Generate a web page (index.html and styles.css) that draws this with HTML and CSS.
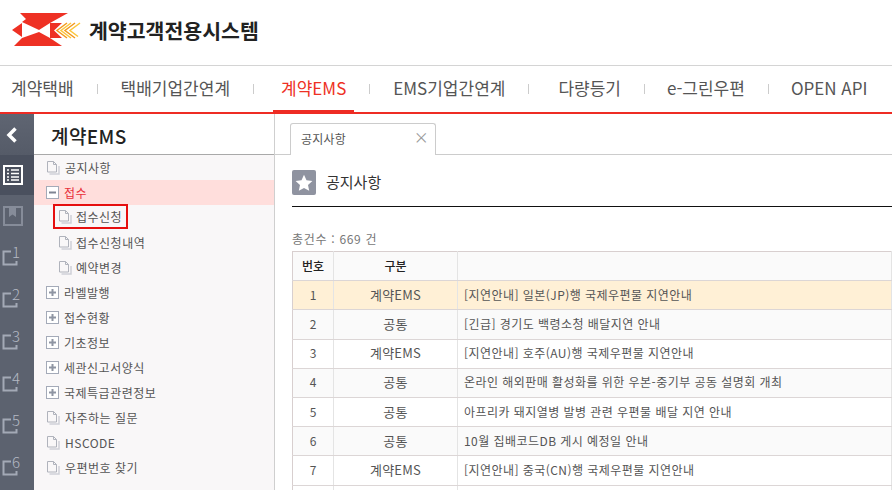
FILE: index.html
```html
<!DOCTYPE html>
<html lang="ko">
<head>
<meta charset="utf-8">
<title>계약고객전용시스템</title>
<link rel="stylesheet" href="styles.css">
</head>
<body>
<svg class="defs" width="0" height="0" aria-hidden="true">
  <symbol id="doc" viewBox="0 0 14 14">
    <path d="M1.500 .5h6l3 3v7.500h-9z" fill="none" stroke="#b0b3bc"/>
    <path d="M7.500 .5v3h3" fill="none" stroke="#b0b3bc"/>
    <path d="M3.500 13h9.500v-8" fill="none" stroke="#cfd1d7" stroke-width="1.500"/>
  </symbol>
  <symbol id="plus" viewBox="0 0 13 13">
    <rect x=".5" y=".5" width="12" height="12" fill="#fff" stroke="#a4aab8"/>
    <path d="M3 6.500h7M6.500 3v7" stroke="#8f95a3" stroke-width="2"/>
  </symbol>
  <symbol id="minus" viewBox="0 0 13 13">
    <rect x=".5" y=".5" width="12" height="12" fill="#fff" stroke="#a4aab8"/>
    <path d="M3 6.500h7" stroke="#7f8593" stroke-width="2"/>
  </symbol>
  <symbol id="corner" viewBox="0 0 20 20">
    <path d="M9 4.500H1.500v13h13V14" fill="none" stroke="#a3a9b6" stroke-width="2"/>
  </symbol>
</svg>

<header class="brand">
  <svg class="logo" width="70" height="34" viewBox="12 13 70 34">
    <path fill="#ee3124" d="M20 13h48L50 23 39 30 22 22l4-3zM14 46h48L50 38 39 32 22 38zM12 30l10-7v14zM50 23h12l-8 7.500 8 7.500H50z"/>
    <path fill="none" stroke="#f39a1f" stroke-width="1.500" d="M67 23l-10 7.500 10 7.500M75 23l-10 7.500 10 7.500"/>
    <path fill="none" stroke="#fbc63c" stroke-width="1.500" d="M71 23l-10 7.500 10 7.500M80 23l-10 7.500 8 6"/>
  </svg>
  <span class="brand-name">계약고객전용시스템</span>
</header>

<nav class="gnb">
  <a class="gnb-item">계약택배</a><i class="gnb-sep"></i>
  <a class="gnb-item">택배기업간연계</a><i class="gnb-sep"></i>
  <a class="gnb-item is-active">계약EMS</a><i class="gnb-sep"></i>
  <a class="gnb-item">EMS기업간연계</a><i class="gnb-sep"></i>
  <a class="gnb-item lead-wide">다량등기</a><i class="gnb-sep"></i>
  <a class="gnb-item lead-tight">e-그린우편</a><i class="gnb-sep"></i>
  <a class="gnb-item lead-tight">OPEN API</a>
</nav>

<div class="workspace">
  <aside class="rail">
    <div class="rail-back">
      <svg width="14" height="18" viewBox="0 0 14 18"><path d="M11.500 2.500L5 9l6.500 6.500" fill="none" stroke="#fff" stroke-width="3.500"/></svg>
    </div>
    <div class="rail-slot is-active">
      <svg width="20" height="20" viewBox="0 0 20 20">
        <rect x="1" y="1" width="18" height="18" fill="#4a505e" stroke="#fff" stroke-width="2"/>
        <path d="M4 5h2M8 5h8M4 8.500h2M8 8.500h8M4 12h2M8 12h8M4 15h2M8 15h8" stroke="#fff" stroke-width="1.600"/>
      </svg>
    </div>
    <div class="rail-slot">
      <svg width="20" height="20" viewBox="0 0 20 20">
        <rect x="1" y="1" width="18" height="18" fill="none" stroke="#868c99" stroke-width="2"/>
        <path d="M6 2h7v9l-3.500-2.500L6 11z" fill="#868c99"/>
      </svg>
    </div>
    <div class="rail-slot num"><svg class="corner" width="20" height="20"><use href="#corner"/></svg><span>1</span></div>
    <div class="rail-slot num"><svg class="corner" width="20" height="20"><use href="#corner"/></svg><span>2</span></div>
    <div class="rail-slot num"><svg class="corner" width="20" height="20"><use href="#corner"/></svg><span>3</span></div>
    <div class="rail-slot num"><svg class="corner" width="20" height="20"><use href="#corner"/></svg><span>4</span></div>
    <div class="rail-slot num"><svg class="corner" width="20" height="20"><use href="#corner"/></svg><span>5</span></div>
    <div class="rail-slot num"><svg class="corner" width="20" height="20"><use href="#corner"/></svg><span>6</span></div>
  </aside>

  <aside class="tree">
    <h2 class="tree-title">계약EMS</h2>
    <ul class="tree-list">
      <li class="node"><svg class="ico" width="14" height="14"><use href="#doc"/></svg>공지사항</li>
      <li class="node is-open"><svg class="box" width="13" height="13"><use href="#minus"/></svg>접수</li>
      <li class="node sub"><span class="marked"><svg class="ico" width="14" height="14"><use href="#doc"/></svg>접수신청</span></li>
      <li class="node sub"><svg class="ico" width="14" height="14"><use href="#doc"/></svg>접수신청내역</li>
      <li class="node sub"><svg class="ico" width="14" height="14"><use href="#doc"/></svg>예약변경</li>
      <li class="node"><svg class="box" width="13" height="13"><use href="#plus"/></svg>라벨발행</li>
      <li class="node"><svg class="box" width="13" height="13"><use href="#plus"/></svg>접수현황</li>
      <li class="node"><svg class="box" width="13" height="13"><use href="#plus"/></svg>기초정보</li>
      <li class="node"><svg class="box" width="13" height="13"><use href="#plus"/></svg>세관신고서양식</li>
      <li class="node"><svg class="box" width="13" height="13"><use href="#plus"/></svg>국제특급관련정보</li>
      <li class="node"><svg class="ico" width="14" height="14"><use href="#doc"/></svg>자주하는 질문</li>
      <li class="node"><svg class="ico" width="14" height="14"><use href="#doc"/></svg>HSCODE</li>
      <li class="node"><svg class="ico" width="14" height="14"><use href="#doc"/></svg>우편번호 찾기</li>
    </ul>
  </aside>

  <main class="main">
    <div class="tabs">
      <div class="tab">공지사항<span class="tab-close">×</span></div>
    </div>
    <div class="content">
      <div class="page-head">
        <span class="star">
          <svg width="18" height="18" viewBox="0 0 18 18"><path fill="#fff" d="M9 .8l2.500 5.400 5.900.7-4.400 4 1.200 5.900L9 13.900l-5.200 2.900L5 10.900l-4.400-4 5.900-.7z"/></svg>
        </span>
        <h1 class="page-title">공지사항</h1>
      </div>
      <p class="total">총건수 : 669 건</p>
      <table class="board">
        <colgroup><col class="c-no"><col class="c-cat"><col class="c-title"></colgroup>
        <thead>
          <tr><th>번호</th><th>구분</th><th></th></tr>
        </thead>
        <tbody>
          <tr class="hot"><td>1</td><td class="cat">계약EMS</td><td>[지연안내] 일본(JP)행 국제우편물 지연안내</td></tr>
          <tr><td>2</td><td class="cat">공통</td><td>[긴급] 경기도 백령소청 배달지연 안내</td></tr>
          <tr><td>3</td><td class="cat">계약EMS</td><td>[지연안내] 호주(AU)행 국제우편물 지연안내</td></tr>
          <tr><td>4</td><td class="cat">공통</td><td>온라인 해외판매 활성화를 위한 우본-중기부 공동 설명회 개최</td></tr>
          <tr><td>5</td><td class="cat">공통</td><td>아프리카 돼지열병 발병 관련 우편물 배달 지연 안내</td></tr>
          <tr><td>6</td><td class="cat">공통</td><td>10월 집배코드DB 게시 예정일 안내</td></tr>
          <tr><td>7</td><td class="cat">계약EMS</td><td>[지연안내] 중국(CN)행 국제우편물 지연안내</td></tr>
          <tr class="tail"><td></td><td></td><td></td></tr>
        </tbody>
      </table>
    </div>
  </main>
</div>
</body>
</html>
```

FILE: styles.css
```css
* { box-sizing: border-box; }
html, body { margin: 0; height: 490px; overflow: hidden; }
body {
  background: #fff;
  color: #555;
  font-family: "Noto Sans CJK KR", "Noto Sans", sans-serif;
  font-size: 12px;
}
.defs { display: block; height: 0; }

.brand {
  height: 66px;
  display: flex;
  align-items: flex-start;
  gap: 7px;
  padding: 13px 0 0 12px;
  border-bottom: 1px solid #d4d4d4;
}
.logo { flex: none; }
.brand-name {
  font-size: 20.500px;
  font-weight: 700;
  line-height: 34px;
  color: #222;
}

.gnb {
  height: 48px;
  display: flex;
  align-items: center;
  border-bottom: 2px solid #ee2c24;
}
.gnb-item {
  position: relative;
  height: 46px;
  padding: 0 23px;
  font-size: 17px;
  line-height: 44px;
  color: #555;
  white-space: nowrap;
}
.gnb-item:first-child { padding-left: 11px; }
.gnb-item.lead-wide { padding-left: 29px; }
.gnb-item.lead-tight { padding-left: 22px; }
.gnb-item.is-active { padding-left: 27px; color: #ee3124; }
.gnb-item.is-active::after {
  content: "";
  position: absolute;
  left: 19px;
  right: 15px;
  bottom: 0;
  height: 2px;
  background: #ee2c24;
}
.gnb-sep { width: 1px; height: 10px; background: #ccc; flex: none; }

.workspace { display: flex; height: 376px; overflow: hidden; }

.rail { width: 34px; flex: none; background: #5c626f; }
.rail-back {
  height: 41px;
  display: flex;
  align-items: center;
  padding-left: 4px;
  background: linear-gradient(#5f6572, #555b68);
}
.rail-slot {
  height: 41px;
  display: flex;
  align-items: center;
  padding-left: 3px;
  color: #a3a9b6;
}
.rail-slot.is-active { height: 40px; background: #4a505e; }
.rail-slot.num { position: relative; height: 42px; padding-left: 2px; }
.rail-slot.num span {
  position: absolute;
  top: 7px;
  left: 12px;
  font-size: 15px;
  line-height: 18px;
  font-weight: 300;
  color: #b4b9c4;
}

.tree {
  width: 241px;
  flex: none;
  background: #f9f7f8;
  border-right: 1px solid #cfcfcf;
}
.tree-title {
  margin: 0;
  height: 41px;
  padding-left: 17px;
  background: #fff;
  border-bottom: 1px solid #a9a9a9;
  font-size: 19px;
  font-weight: 500;
  line-height: 44px;
  letter-spacing: .4px;
  color: #222;
}
.tree-list { list-style: none; margin: 0; padding: 0; }
.node {
  height: 25px;
  display: flex;
  align-items: center;
  padding-left: 12px;
  line-height: 25px;
  letter-spacing: .5px;
  white-space: nowrap;
}
.ico, .box { margin-right: 5px; flex: none; }
.node.is-open { background: #ffdedc; color: #e8303a; }
.node.sub { padding-left: 24px; }
.node.sub .ico { margin-right: 4px; }
.marked {
  display: flex;
  align-items: center;
  align-self: flex-start;
  height: 25px;
  width: 75px;
  margin: -1px 0 0 -5px;
  padding-left: 3px;
  border: 2px solid #e60f0f;
}

.main { flex: 1; min-width: 0; }
.tabs {
  height: 41px;
  padding: 9px 0 0 15px;
  border-bottom: 1px solid #ccc;
}
.tab {
  position: relative;
  width: 146px;
  height: 32px;
  padding-left: 10px;
  background: #fff;
  border: 1px solid #ccc;
  border-bottom: 0;
  border-radius: 3px 3px 0 0;
  line-height: 30px;
  letter-spacing: .2px;
}
.tab-close {
  position: absolute;
  top: 0;
  right: 6px;
  font-size: 15px;
  line-height: 25px;
  color: #999;
}
.content { padding: 15px 0 0 17px; }
.page-head {
  height: 37px;
  display: flex;
  align-items: flex-start;
  gap: 10px;
  border-bottom: 1px solid #111;
}
.star {
  width: 24px;
  height: 25px;
  display: flex;
  align-items: center;
  justify-content: center;
  background: #8f93a0;
  border-radius: 2px;
}
.page-title {
  margin: 0;
  font-size: 15px;
  font-weight: 400;
  line-height: 24px;
  color: #333;
}
.total {
  margin: 0;
  height: 44px;
  padding-top: 22px;
  line-height: 20px;
  letter-spacing: .7px;
  color: #777;
}
.board {
  table-layout: fixed;
  border-collapse: collapse;
  width: 100%;
  border-left: 1px solid #d8cfcf;
  border-top: 1px solid #d8cfcf;
}
.c-no { width: 41px; }
.c-cat { width: 124px; }
.board th, .board td {
  height: 29.200px;
  padding: 0 0 2px;
  text-align: center;
  border-right: 1px solid #e4e4e4;
  border-bottom: 1px solid #dcd6d6;
  font-weight: 400;
}
.board th {
  background: #fafafa;
  color: #222;
  font-weight: 500;
}
.board td:last-child { text-align: left; padding-left: 6px; letter-spacing: .45px; }
.board td.cat { font-size: 13px; letter-spacing: .2px; }
.board tbody tr:nth-child(even) td { background: #fafafa; }
.board tbody tr.hot td { background: #fff0d6; }
.board tbody tr.tail td { height: 5px; padding: 0; border-bottom: 0; background: #fff; }
```
